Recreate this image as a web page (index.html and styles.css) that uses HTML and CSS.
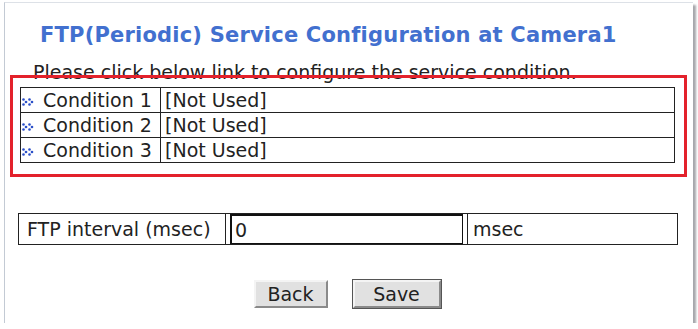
FILE: index.html
```html
<!DOCTYPE html>
<html lang="en">

<head>
    <meta charset="UTF-8">
    <title>FTP(Periodic) Service Configuration</title>
    <link rel="stylesheet" href="styles.css">
</head>

<body>
    <div class="panel">
        <h1 class="title">FTP(Periodic) Service Configuration at Camera1</h1>

        <p class="hint">Please click below link to configure the service condition.</p>
        <table class="conditions">
            <tr>
                <td class="name"><svg class="arrow" viewBox="0 0 13 8"><circle cx="1.5" cy="1.5" r="1.3"/><circle cx="4" cy="4" r="1.3"/><circle cx="1.5" cy="6.5" r="1.3"/><circle cx="7.5" cy="1.5" r="1.3"/><circle cx="10" cy="4" r="1.3"/><circle cx="7.5" cy="6.5" r="1.3"/></svg>Condition 1</td>
                <td>[Not Used]</td>
            </tr>
            <tr>
                <td class="name"><svg class="arrow" viewBox="0 0 13 8"><circle cx="1.5" cy="1.5" r="1.3"/><circle cx="4" cy="4" r="1.3"/><circle cx="1.5" cy="6.5" r="1.3"/><circle cx="7.5" cy="1.5" r="1.3"/><circle cx="10" cy="4" r="1.3"/><circle cx="7.5" cy="6.5" r="1.3"/></svg>Condition 2</td>
                <td>[Not Used]</td>
            </tr>
            <tr>
                <td class="name"><svg class="arrow" viewBox="0 0 13 8"><circle cx="1.5" cy="1.5" r="1.3"/><circle cx="4" cy="4" r="1.3"/><circle cx="1.5" cy="6.5" r="1.3"/><circle cx="7.5" cy="1.5" r="1.3"/><circle cx="10" cy="4" r="1.3"/><circle cx="7.5" cy="6.5" r="1.3"/></svg>Condition 3</td>
                <td>[Not Used]</td>
            </tr>
        </table>

        <table class="interval">
            <tr>
                <td class="label">FTP interval (msec)</td>
                <td class="field"><input type="text" value="0"></td>
                <td class="unit">msec</td>
            </tr>
        </table>

        <div class="buttons">
            <button class="btn">Back</button>
            <button class="btn save">Save</button>
        </div>

        <!-- highlight box -->
        <div class="highlight"></div>
    </div>
</body>

</html>
```

FILE: styles.css
```css
body {
    margin: 0;
    background: #fff;
    font-family: "DejaVu Sans", Verdana, sans-serif;
    color: #222;
}

.panel {
    position: relative;
    box-sizing: border-box;
    width: 689px;
    height: 321px;
    margin: 2px 0 0 4px;
    padding: 19px 12px 0 13px;
    border-left: 1px solid #c3cad4;
    border-top: 1px solid #dde1e7;
    box-shadow: 3px 3px 2px rgba(60, 60, 70, 0.45);
    background: #fff;
}

.title {
    margin: 0 0 0 22px;
    font-size: 21px;
    letter-spacing: 0.2px;
    line-height: 26px;
    font-weight: bold;
    color: #4270cf;
}

.hint {
    margin: 13px 0 0 15px;
    font-size: 19px;
    line-height: 22px;
    color: #222;
}

.conditions {
    margin: 4px 0 0 2px;
    width: 655px;
    border-collapse: collapse;
    font-size: 19px;
}

.conditions td {
    height: 24px;
    padding: 0 0 0 4px;
    border: 1px solid #222;
    line-height: 22px;
    white-space: nowrap;
}

.conditions .name {
    width: 139px;
    padding-left: 0;
}

.arrow {
    width: 13px;
    height: 8px;
    margin: 0 8px 0 1px;
    fill: #2a4fc8;
    vertical-align: 1px;
}

.interval {
    margin-top: 50px;
    width: 660px;
    border-collapse: collapse;
    font-size: 19px;
}

.interval td {
    height: 30px;
    padding: 0;
    border: 1px solid #222;
}

.interval .label {
    width: 198px;
    padding-left: 8px;
}

.interval .field {
    width: 237px;
    padding-left: 4px;
}

.interval input {
    box-sizing: border-box;
    display: block;
    width: 233px;
    height: 30px;
    margin: 0;
    padding: 0 3px;
    border: 1px solid #111;
    border-width: 2px 1px 1px 2px;
    font-family: "DejaVu Sans", Verdana, sans-serif;
    font-size: 19px;
    color: #222;
}

.interval .unit {
    padding-left: 5px;
}

.buttons {
    display: flex;
    justify-content: center;
    gap: 25px;
    margin: 35px 0 0 -5px;
}

.btn {
    box-sizing: border-box;
    width: 74px;
    height: 28px;
    padding: 0;
    font-family: "DejaVu Sans", Verdana, sans-serif;
    font-size: 19px;
    color: #222;
    background: #e1e1e1;
    border: 2px solid;
    border-color: #f4f4f4 #8a8a8a #8a8a8a #f4f4f4;
}

.btn.save {
    width: 88px;
    outline: 1px solid #555;
}

.highlight {
    position: absolute;
    left: 5px;
    top: 72px;
    width: 671px;
    height: 96px;
    border: 3px solid #e3212b;
}
```
